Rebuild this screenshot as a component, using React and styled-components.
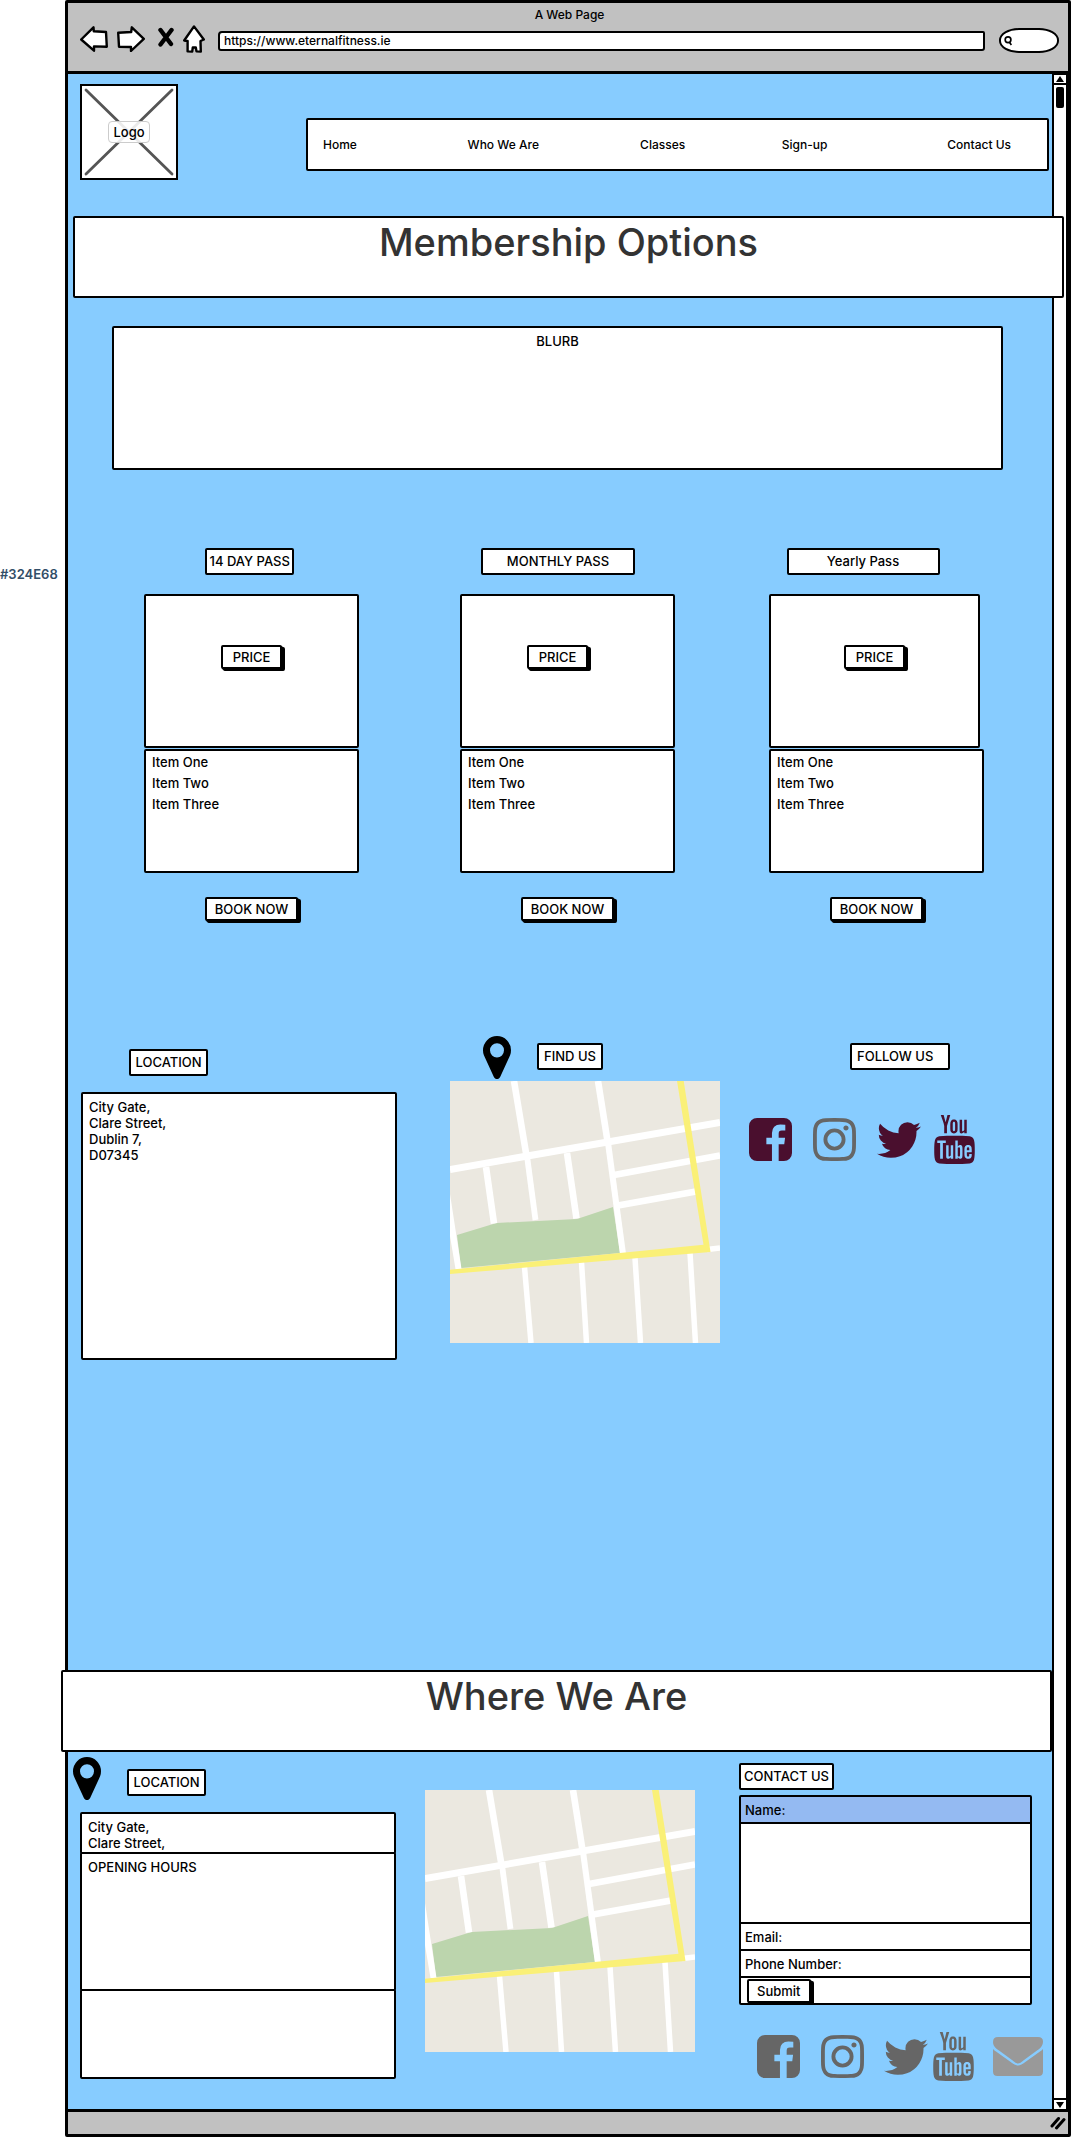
import React from "react";
import styled, { createGlobalStyle } from "styled-components";
import { TfiYoutube } from "react-icons/tfi";

const GlobalStyle = createGlobalStyle`
  *, *::before, *::after { box-sizing: border-box; }
  body {
    margin: 0;
    background: #fff;
    color: #000;
    font: 500 13px/16px Inter, "Open Sans", sans-serif;
  }
  button, input, textarea { font: inherit; color: inherit; }
`;

const INK = "#000";
const SKY = "#87ccff";
const WINE = "#4a0f2e";
const GREY = "#666";

/* ---------- browser frame ---------- */

const Page = styled.div`
  display: grid;
  grid-template-columns: 65px minmax(0, 1fr);
  padding-right: 1px;
`;

const Note = styled.aside`
  padding-top: 566px;
  color: #324e68;
  font-weight: 600;
`;

const Frame = styled.div`
  border: 3px solid ${INK};
  border-radius: 2px;
`;

const Chrome = styled.header`
  height: 71px;
  padding: 2px 9px 0 12px;
  background: #c1c1c1;
  border-bottom: 3px solid ${INK};
`;

const WindowTitle = styled.div`
  font-size: 12px;
  line-height: 20px;
  text-align: center;
`;

const Toolbar = styled.div`
  display: flex;
  align-items: center;
  height: 28px;
`;

const ToolButton = styled.button`
  display: flex;
  margin-right: ${(p) => p.$gap}px;
  padding: 0;
  border: 0;
  background: none;
`;

const AddressBar = styled.input`
  flex: 1;
  min-width: 0;
  height: 20px;
  margin-top: 3px;
  padding: 0 4px;
  background: #fff;
  border: 2px solid ${INK};
  border-radius: 4px 2px 3px 3px;
  font-size: 12px;
`;

const SearchPill = styled.label`
  display: flex;
  align-items: center;
  width: 60px;
  height: 25px;
  margin: 3px 0 0 14px;
  padding-left: 3px;
  background: #fff;
  border: 2px solid ${INK};
  border-radius: 20px / 12px;
`;

const SearchField = styled.input`
  width: 100%;
  min-width: 0;
  padding: 0;
  border: 0;
  background: none;
  outline: none;
`;

const Viewport = styled.div`
  display: grid;
  grid-template-columns: minmax(0, 1fr) 16px;
`;

const Content = styled.main`
  background: ${SKY};
  padding: 10px 0 28px;
`;

const ScrollTrack = styled.div`
  display: flex;
  flex-direction: column;
  align-items: center;
  background: #fff;
  border: solid ${INK};
  border-width: 0 2px;
`;

const ScrollArrow = styled.button`
  display: flex;
  align-items: center;
  justify-content: center;
  width: 12px;
  height: 11px;
  padding: 0;
  background: #fff;
  border: solid ${INK};
  border-width: ${(p) => (p.$down ? "2px 0 0" : "1px 0 2px")};
`;

const ScrollThumb = styled.div`
  width: 8px;
  height: 21px;
  margin: 2px 0 auto;
  background: ${INK};
  border-radius: 2px;
`;

const StatusBar = styled.footer`
  display: flex;
  align-items: center;
  justify-content: flex-end;
  height: 25px;
  padding-right: 2px;
  background: #c1c1c1;
  border-top: 3px solid ${INK};
`;

/* ---------- shared sketch parts ---------- */

const Box = styled.div`
  height: ${(p) => p.$h}px;
  padding: 5px 6px;
  background: #fff;
  border: 2px solid ${INK};
  border-radius: 2px;
`;

const Tag = styled.h2`
  width: ${(p) => p.$w}px;
  height: 27px;
  margin: 0;
  padding: 0 ${(p) => (p.$left ? 5 : 3)}px;
  background: #fff;
  border: 2px solid ${INK};
  border-radius: 2px;
  font-size: 13px;
  font-weight: 500;
  line-height: 23px;
  text-align: ${(p) => (p.$left ? "left" : "center")};
  white-space: nowrap;
`;

const SketchButton = styled.button`
  height: 24px;
  padding: 0 ${(p) => (p.$roomy ? 10 : 8)}px;
  background: #fff;
  border: 2px solid ${INK};
  border-radius: 2px;
  box-shadow: 1px 1px 0 ${INK}, 2px 2px 0 ${INK}, 3px 2px 0 ${INK};
  line-height: 20px;
  white-space: nowrap;
`;

/* ---------- top of the page ---------- */

const SiteHeader = styled.div`
  display: flex;
  padding: 0 3px 0 12px;
`;

const Logo = styled.div`
  display: grid;
  place-items: center;
  width: 98px;
  height: 96px;
  background: #fff;
  border: 2px solid ${INK};
  > * { grid-area: 1 / 1; }
`;

const LogoLabel = styled.span`
  z-index: 1;
  padding: 2px 4px;
  background: rgba(255, 255, 255, 0.88);
  border: 1px solid #ccc;
  border-radius: 4px;
`;

const Nav = styled.nav`
  flex: 1;
  display: grid;
  grid-template-columns: 145fr 173fr 142fr 166fr 98fr;
  align-items: center;
  height: 53px;
  margin: 34px 0 0 128px;
  padding: 0 2px 0 15px;
  background: #fff;
  border: 2px solid ${INK};
  border-radius: 2px;
`;

const NavLink = styled.a`
  color: inherit;
  font-size: 12px;
  text-decoration: none;
  white-space: nowrap;
`;

const Banner = styled.div`
  position: relative;
  height: 82px;
  margin: ${(p) => p.$margin};
  background: #fff;
  border: 2px solid ${INK};
  border-radius: 2px;
`;

const BannerTitle = styled.h1`
  margin: 0;
  color: #333;
  font-size: 38px;
  font-weight: 500;
  line-height: 48px;
  text-align: center;
`;

const Blurb = styled(Box)`
  margin: 28px 49px 0 44px;
  text-align: center;
`;

/* ---------- passes ---------- */

const Passes = styled.section`
  display: grid;
  grid-template-columns: 316fr 309fr 215fr;
  margin: 78px 68px 0 76px;
`;

const Pass = styled.article`
  display: flex;
  flex-direction: column;
  align-items: center;
  width: 215px;
`;

const PassTag = styled.div`
  margin-right: ${(p) => p.$back}px;
  margin-bottom: 19px;
`;

const PriceBox = styled(Box)`
  align-self: flex-start;
  width: ${(p) => p.$w}px;
  padding-top: 49px;
  padding-right: ${(p) => p.$back}px;
  text-align: center;
`;

const Perks = styled.ul`
  align-self: stretch;
  height: 124px;
  margin: 1px 0 24px;
  padding: 1px 6px;
  background: #fff;
  border: 2px solid ${INK};
  border-radius: 2px;
  line-height: 21px;
  list-style: none;
`;

/* ---------- location sections ---------- */

const Visit = styled.section`
  display: grid;
  grid-template-columns: 369fr 299fr 303fr;
  margin: 115px 0 310px;
  padding-left: 13px;
`;

const Foot = styled.section`
  display: grid;
  grid-template-columns: 352fr 314fr 313fr;
  padding: 5px 0 0 5px;
`;

const Column = styled.div`
  padding-top: ${(p) => p.$top || 0}px;
`;

const TagRow = styled.div`
  display: flex;
  align-items: flex-start;
  padding-left: ${(p) => p.$indent || 0}px;
`;

const PinTag = styled.div`
  margin: ${(p) => p.$top}px 0 0 26px;
`;

const PostalAddress = styled(Box)`
  width: 316px;
  margin-top: 16px;
  white-space: pre-line;
`;

const Stack = styled.div`
  display: flex;
  flex-direction: column;
  width: 316px;
  margin: 12px 0 0 7px;
  > * + * { margin-top: -2px; }
`;

const MapFigure = styled.figure`
  margin: ${(p) => p.$top}px 0 0;
  line-height: 0;
`;

const Social = styled.div`
  display: flex;
  align-items: center;
  height: 49px;
  margin: ${(p) => p.$margin};
`;

const SocialLink = styled.a`
  display: flex;
  margin-right: ${(p) => p.$gap || 0}px;
  color: ${(p) => p.$color};
`;

/* ---------- contact form ---------- */

const Form = styled.form`
  width: 293px;
  margin-top: 5px;
  background: #fff;
  border: 2px solid ${INK};
  border-radius: 2px;
`;

const Field = styled.label`
  display: flex;
  align-items: center;
  height: 27px;
  padding: 0 4px;
  background: ${(p) => (p.$active ? "#94baf2" : "#fff")};
  border-bottom: 2px solid ${INK};
`;

const FieldInput = styled.input`
  flex: 1;
  min-width: 0;
  padding: 0 4px;
  border: 0;
  background: none;
  outline: none;
`;

const Message = styled.textarea`
  display: block;
  width: 100%;
  height: 100px;
  padding: 4px;
  border: 0;
  border-bottom: 2px solid ${INK};
  background: #fff;
  outline: none;
  resize: none;
`;

const SubmitRow = styled.div`
  height: 25px;
  padding: 1px 0 0 6px;
`;

/* ---------- drawings ---------- */

const stroke = { fill: "#fff", stroke: INK, strokeWidth: 2.4, strokeLinejoin: "round" };

const BackIcon = () => (
  <svg width="28" height="26" viewBox="0 0 28 26">
    <path d="M1.2 13.5 13.5 1.3 13.8 5.3 26 6 26.8 20.7 14 20.4 14 24.7Z" {...stroke} />
  </svg>
);
const ForwardIcon = () => (
  <svg width="28" height="26" viewBox="0 0 28 26">
    <path d="M26.8 12.8 14.8 1.3 14.2 6 1.2 6.8 2 20.7 14 21 14 25Z" {...stroke} />
  </svg>
);
const StopIcon = () => (
  <svg width="16" height="26" viewBox="0 0 16 26">
    <path d="M2.5 4 13 18M13.5 4 2.5 18.500" fill="none" stroke={INK} strokeWidth="4.4" strokeLinecap="round" />
  </svg>
);
const HomeIcon = () => (
  <svg width="22" height="28" viewBox="0 0 22 28">
    <path d="M11 1.4 20.8 14.5 17.5 16 17.8 26.6 13.5 26.4 12.8 22.5 9.8 22.5 9.2 26.6 4.6 26.4 4.6 16 1.2 15.5Z" {...stroke} />
  </svg>
);
const SearchIcon = () => (
  <svg width="10" height="12" viewBox="0 0 10 12">
    <circle cx="4.8" cy="4.6" r="3.4" fill="none" stroke={INK} strokeWidth="2" />
    <path d="M6.5 7.5 8.8 10.8" stroke={INK} strokeWidth="2" />
  </svg>
);
const CrossLines = () => (
  <svg width="94" height="92" viewBox="0 0 94 92">
    <path d="M4 4 90 88M90 4 4 88" stroke="#555" strokeWidth="2.8" strokeLinecap="round" />
  </svg>
);
const Triangle = ({ down }) => (
  <svg width="8" height="6" viewBox="0 0 8 6">
    <path d={down ? "M0 0H8L4 6Z" : "M0 6H8L4 0Z"} />
  </svg>
);
const ResizeGrip = () => (
  <svg width="16" height="14" viewBox="0 0 16 14">
    <path d="M2 10 8.5 2.5M6.5 12 14 3.5" stroke={INK} strokeWidth="3" strokeLinecap="round" />
  </svg>
);
const Pin = () => (
  <svg width="28" height="43" viewBox="384 128 1024 1536" preserveAspectRatio="none">
    <path d="M1152 640q0-106-75-181t-181-75-181 75-75 181 75 181 181 75 181-75 75-181zm256 0q0 109-33 179l-364 774q-16 33-47.5 52t-67.5 19-67.5-19-46.5-52l-365-774q-33-70-33-179 0-212 150-362t362-150 362 150 150 362z" />
  </svg>
);
const Facebook = () => (
  <svg width="43" height="43" viewBox="128 128 1536 1536" fill="currentColor">
    <path d="M1376 128q119 0 203.5 84.5t84.5 203.5v960q0 119-84.5 203.5t-203.5 84.5h-188v-595h199l30-232h-229v-148q0-56 23.5-84t91.5-28l122-1v-207q-63-9-178-9-136 0-217.5 80t-81.5 226v171h-200v232h200v595h-532q-119 0-203.5-84.5t-84.5-203.5v-960q0-119 84.5-203.5t203.5-84.5h960z" />
  </svg>
);
const Instagram = () => (
  <svg width="43" height="43" viewBox="128 128 1536 1536" fill="currentColor">
    <path d="M1152 896q0-106-75-181t-181-75-181 75-75 181 75 181 181 75 181-75 75-181zm138 0q0 164-115 279t-279 115-279-115-115-279 115-279 279-115 279 115 115 279zm108-410q0 38-27 65t-65 27-65-27-27-65 27-65 65-27 65 27 27 65zm-502-220q-7 0-76.5-.5t-105.5 0-96.5 3-103 10-71.5 18.5q-50 20-88 58t-58 88q-11 29-18.5 71.5t-10 103-3 96.5 0 105.5.5 76.5-.5 76.5 0 105.5 3 96.5 10 103 18.5 71.5q20 50 58 88t88 58q29 11 71.5 18.5t103 10 96.5 3 105.5 0 76.5-.5 76.5.5 105.5 0 96.5-3 103-10 71.5-18.5q50-20 88-58t58-88q11-29 18.5-71.5t10-103 3-96.5 0-105.5-.5-76.5.5-76.5 0-105.5-3-96.5-10-103-18.5-71.5q-20-50-58-88t-88-58q-29-11-71.5-18.5t-103-10-96.5-3-105.5 0-76.5.5zm768 630q0 229-5 317-10 208-124 322t-322 124q-88 5-317 5t-317-5q-208-10-322-124t-124-322q-5-88-5-317t5-317q10-208 124-322t322-124q88-5 317-5t317 5q208 10 322 124t124 322q5 88 5 317z" />
  </svg>
);
const Twitter = () => (
  <svg width="44" height="36" viewBox="108 256 1576 1280" fill="currentColor">
    <path d="M1684 408q-67 98-162 167 1 14 1 42 0 130-38 259.5t-115.5 248.5-184.5 210.5-258 146-323 54.5q-271 0-496-145 35 4 78 4 225 0 401-138-105-2-188-64.5t-114-159.5q33 5 61 5 43 0 85-11-112-23-185.5-111.5t-73.5-205.5v-4q68 38 146 41-66-44-105-115t-39-154q0-88 44-163 121 149 294.5 238.5t371.5 99.5q-8-38-8-74 0-134 94.5-228.5t228.5-94.5q140 0 236 102 109-21 205-78-37 115-142 178 93-10 186-50z" />
  </svg>
);
const Envelope = () => (
  <svg width="50" height="39" viewBox="0 0 50 39" fill="currentColor">
    <path d="M5 0H45Q50 0 50 4.5C50 9 47 11.500 44 13.500L31 23Q27 26.500 25 26.500T19 23L6 13.500C3 11.500 0 9 0 5Q0 0 5 0Z" />
    <path d="M0 12Q1.500 13.500 3 14.500L17 24.500Q22 28.500 25 28.500T33 24.500L47 14.500Q48.500 13.500 50 12V34.500Q50 39 45.500 39H4.500Q0 39 0 34.500Z" />
  </svg>
);

const StreetMap = () => (
  <svg width="270" height="262" viewBox="0 0 270 262" role="img" aria-label="Street map">
    <rect width="270" height="262" fill="#ebe8e0" />
    <path d="M7 154 46.500 142 127 138 163 126 170 172 11 187Z" fill="#bcd5ad" />
    <g fill="none" stroke="#fff" strokeWidth="6.600">
      <path d="M0 88.500 270 41.500" strokeWidth="7" />
      <path d="M64 0 76.500 75" />
      <path d="M77 75 85.500 139" strokeWidth="5.800" />
      <path d="M148 0 157.500 60" />
      <path d="M157.500 58 173 173" strokeWidth="6" />
      <path d="M36 86 44 142.500M117 72 126.500 137.500" />
      <path d="M164 94 270 74.500M168 124.500 246 110.500" />
      <path d="M257 168.500 270 167" strokeWidth="5.500" />
      <path d="M74.500 186 81 262M131.500 181 136.500 262M185 177 190.500 262M240 172 245.500 262" strokeWidth="5.500" />
    </g>
    <path d="M0 113 11.500 188H5.500L0 155Z" fill="#fff" />
    <path d="M227 0H233.700L260.500 171 0 193V188.700L253.500 163.700Z" fill="#faf077" />
  </svg>
);

/* ---------- data ---------- */

const LINKS = ["Home", "Who We Are", "Classes", "Sign-up", "Contact Us"];

const PASSES = [
  { name: "14 DAY PASS", tagWidth: 89, tagBack: 5, boxWidth: 215, priceBack: 6 },
  { name: "MONTHLY PASS", tagWidth: 154, tagBack: 19, boxWidth: 215, priceBack: 26 },
  { name: "Yearly Pass", tagWidth: 153, tagBack: 27, boxWidth: 211, priceBack: 6 },
];

export default function App() {
  return (
    <>
      <GlobalStyle />
      <Page>
        <Note>#324E68</Note>
        <Frame>
          <Chrome>
            <WindowTitle>A Web Page</WindowTitle>
            <Toolbar>
              <ToolButton $gap={9} aria-label="Back"><BackIcon /></ToolButton>
              <ToolButton $gap={13} aria-label="Forward"><ForwardIcon /></ToolButton>
              <ToolButton $gap={9} aria-label="Stop"><StopIcon /></ToolButton>
              <ToolButton $gap={13} aria-label="Home"><HomeIcon /></ToolButton>
              <AddressBar aria-label="Address" defaultValue="https://www.eternalfitness.ie" />
              <SearchPill>
                <SearchIcon />
                <SearchField aria-label="Search" />
              </SearchPill>
            </Toolbar>
          </Chrome>

          <Viewport>
            <Content>
              <SiteHeader>
                <Logo>
                  <CrossLines />
                  <LogoLabel>Logo</LogoLabel>
                </Logo>
                <Nav>
                  {LINKS.map((l) => <NavLink href="#" key={l}>{l}</NavLink>)}
                </Nav>
              </SiteHeader>

              <Banner $margin="36px -12px 0 5px"><BannerTitle>Membership Options</BannerTitle></Banner>
              <Blurb $h={144}>BLURB</Blurb>

              <Passes>
                {PASSES.map((p) => (
                  <Pass key={p.name}>
                    <PassTag $back={p.tagBack}><Tag $w={p.tagWidth}>{p.name}</Tag></PassTag>
                    <PriceBox $h={154} $w={p.boxWidth} $back={p.priceBack}>
                      <SketchButton $roomy>PRICE</SketchButton>
                    </PriceBox>
                    <Perks>
                      <li>Item One</li>
                      <li>Item Two</li>
                      <li>Item Three</li>
                    </Perks>
                    <SketchButton>BOOK NOW</SketchButton>
                  </Pass>
                ))}
              </Passes>

              <Visit>
                <Column $top={13}>
                  <TagRow $indent={48}><Tag $w={79}>LOCATION</Tag></TagRow>
                  <PostalAddress $h={268}>{"City Gate,\nClare Street,\nDublin 7,\nD07345"}</PostalAddress>
                </Column>
                <Column>
                  <TagRow $indent={33}>
                    <Pin />
                    <PinTag $top={7}><Tag $w={66}>FIND US</Tag></PinTag>
                  </TagRow>
                  <MapFigure $top={2}><StreetMap /></MapFigure>
                </Column>
                <Column $top={7}>
                  <TagRow $indent={101}><Tag $w={100} $left>FOLLOW US</Tag></TagRow>
                  <Social $margin="45px 0 0">
                    <SocialLink href="#" aria-label="Facebook" $color={WINE} $gap={21}><Facebook /></SocialLink>
                    <SocialLink href="#" aria-label="Instagram" $color={GREY} $gap={21}><Instagram /></SocialLink>
                    <SocialLink href="#" aria-label="Twitter" $color={WINE} $gap={9}><Twitter /></SocialLink>
                    <SocialLink href="#" aria-label="YouTube" $color={WINE}><TfiYoutube size={49} /></SocialLink>
                  </Social>
                </Column>
              </Visit>

              <Banner $margin="0 0 0 -7px"><BannerTitle as="h2">Where We Are</BannerTitle></Banner>

              <Foot>
                <Column>
                  <TagRow>
                    <Pin />
                    <PinTag $top={12}><Tag $w={79}>LOCATION</Tag></PinTag>
                  </TagRow>
                  <Stack>
                    <Box $h={42}>City Gate,<br />Clare Street,</Box>
                    <Box $h={139}>OPENING HOURS</Box>
                    <Box $h={90} />
                  </Stack>
                </Column>
                <Column $top={33}>
                  <MapFigure $top={0}><StreetMap /></MapFigure>
                </Column>
                <Column $top={6}>
                  <Tag $w={95}>CONTACT US</Tag>
                  <Form onSubmit={(e) => e.preventDefault()}>
                    <Field $active>Name:<FieldInput name="name" /></Field>
                    <Message name="message" aria-label="Message" />
                    <Field>Email:<FieldInput name="email" type="email" /></Field>
                    <Field>Phone Number:<FieldInput name="phone" type="tel" /></Field>
                    <SubmitRow><SketchButton type="submit">Submit</SketchButton></SubmitRow>
                  </Form>
                  <Social $margin="27px 0 0 18px">
                    <SocialLink href="#" aria-label="Facebook" $color={GREY} $gap={21}><Facebook /></SocialLink>
                    <SocialLink href="#" aria-label="Instagram" $color={GREY} $gap={20}><Instagram /></SocialLink>
                    <SocialLink href="#" aria-label="Twitter" $color={GREY} $gap={1}><Twitter /></SocialLink>
                    <SocialLink href="#" aria-label="YouTube" $color={GREY} $gap={15}><TfiYoutube size={49} /></SocialLink>
                    <SocialLink href="#" aria-label="Email" $color="#999"><Envelope /></SocialLink>
                  </Social>
                </Column>
              </Foot>
            </Content>

            <ScrollTrack>
              <ScrollArrow aria-label="Scroll up"><Triangle /></ScrollArrow>
              <ScrollThumb />
              <ScrollArrow $down aria-label="Scroll down"><Triangle down /></ScrollArrow>
            </ScrollTrack>
          </Viewport>

          <StatusBar><ResizeGrip /></StatusBar>
        </Frame>
      </Page>
    </>
  );
}
